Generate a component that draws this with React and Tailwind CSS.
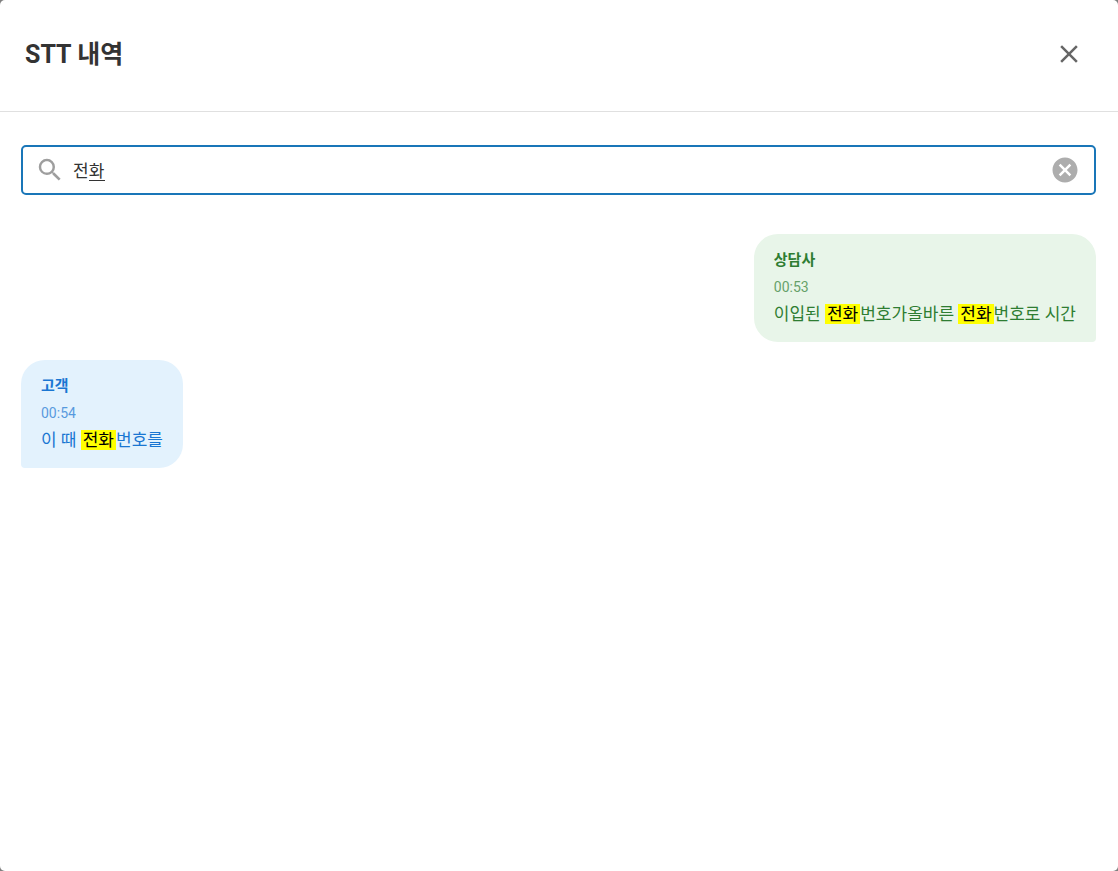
import React, { useState } from 'react'
import { MdCancel, MdClose, MdSearch } from 'react-icons/md'

const messages = [
    {
        id: 1,
        speaker: 'agent',
        name: '상담사',
        time: '00:53',
        text: '이입된 전화번호가올바른 전화번호로 시간',
    },
    {
        id: 2,
        speaker: 'customer',
        name: '고객',
        time: '00:54',
        text: '이 때 전화번호를',
    },
]

function Highlight({ text, keyword }) {
    if (!keyword) return text

    return text.split(keyword).map((part, index) => (
        <React.Fragment key={index}>
            {index > 0 && (
                <mark className="px-0.5 bg-[#ffff00] text-black">
                    {keyword}
                </mark>
            )}
            {part}
        </React.Fragment>
    ))
}

function Message({ message, keyword }) {
    const isAgent = message.speaker === 'agent'

    return (
        <li
            className={`max-w-[80%] px-5 pt-[15px] pb-3 rounded-3xl ${
                isAgent
                    ? 'self-end rounded-br-sm bg-[#e8f5e9] text-[#2e7d32]'
                    : 'self-start rounded-bl-sm bg-[#e3f2fd] text-[#1976d2]'
            }`}
        >
            <p className="mb-[5px] text-[15px] leading-[22px] font-bold">
                {message.name}
            </p>
            <p className="text-[14px] leading-[22px] opacity-70">
                {message.time}
            </p>
            <p className="text-[17px] leading-8">
                <Highlight text={message.text} keyword={keyword} />
            </p>
        </li>
    )
}

export default function App() {
    const [keyword, setKeyword] = useState('전화')
    const [composing, setComposing] = useState(true)

    const handleChange = e => {
        setKeyword(e.target.value)
        setComposing(false)
    }

    const handleClear = () => {
        setKeyword('')
        setComposing(false)
    }

    const results = messages.filter(message => message.text.includes(keyword))

    return (
        <div className="min-h-screen flex bg-[#808080] font-[Roboto,'Noto_Sans_CJK_KR',sans-serif]">
            <section
                role="dialog"
                aria-labelledby="stt-title"
                className="flex-1 min-w-0 rounded-[5px] bg-white"
            >
                <header className="flex items-center justify-between pt-[29px] pb-8 pl-[25px] pr-6 border-b border-[#e0e0e0]">
                    <h1
                        id="stt-title"
                        className="pt-0.5 text-[25px] leading-8 font-bold text-[#333333]"
                    >
                        STT 내역
                    </h1>
                    <button
                        type="button"
                        aria-label="닫기"
                        className="p-2.5 rounded-full text-[#666666] hover:bg-gray-100"
                    >
                        <MdClose className="size-[30px]" />
                    </button>
                </header>

                <div className="pl-[21px] pr-[22px] pt-[33px] pb-6">
                    <div className="flex items-center gap-2 h-[50px] pl-3 pr-3.5 border-2 border-[#1976b8] rounded-[5px]">
                        <MdSearch className="size-[30px] shrink-0 text-[#9e9e9e]" />
                        <div className="relative flex-1">
                            <input
                                type="text"
                                aria-label="검색"
                                value={keyword}
                                onChange={handleChange}
                                className="block w-full pt-0.5 text-[17px] leading-6 text-[#333333] outline-none"
                            />
                            {/* underline of the syllable still being typed */}
                            {composing && (
                                <span className="absolute left-4 bottom-0.5 w-4 h-px bg-[#333333]" />
                            )}
                        </div>
                        <button
                            type="button"
                            aria-label="지우기"
                            onClick={handleClear}
                            className="shrink-0 text-[#adadad] hover:text-gray-500"
                        >
                            <MdCancel className="size-[30px]" />
                        </button>
                    </div>

                    <ul className="flex flex-col gap-[18px] mt-[39px]">
                        {results.map(message => (
                            <Message
                                key={message.id}
                                message={message}
                                keyword={keyword}
                            />
                        ))}
                    </ul>
                </div>
            </section>
        </div>
    )
}
